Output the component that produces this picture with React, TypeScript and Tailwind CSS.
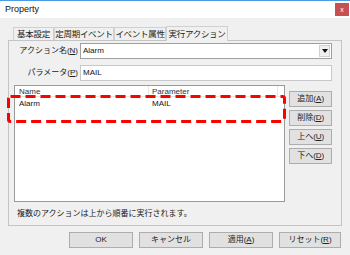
const font = { fontFamily: '"Liberation Sans", "Noto Sans CJK JP", sans-serif' };

function Btn({ children, className = "" }: { children: React.ReactNode; className?: string }) {
  return (
    <div
      className={`flex h-[16px] items-center justify-center border border-[#adadad] bg-[#e1e1e1] text-[8px] text-[#222] ${className}`}
    >
      {children}
    </div>
  );
}

function Tab({ label, w, active }: { label: string; w: string; active?: boolean }) {
  return (
    <div
      className={`flex items-center justify-center border-l border-r border-t border-[#d0d0d0] text-[8.5px] tracking-[-0.3px] text-[#222] ${w} ${
        active ? "z-10 -mb-px h-[15px] bg-[#f0f0f0]" : "h-[13px]"
      }`}
    >
      {label}
    </div>
  );
}

export default function App() {
  return (
    <div className="relative h-[255px] w-[350px] overflow-hidden bg-[#f0f0f0]" style={font}>
      {/* Title bar */}
      <div className="flex h-[18px] items-center justify-between border-t border-[#4a9be0] bg-white pl-[5px] pr-[1px]">
        <span className="text-[9px] text-[#111]">Property</span>
        <div className="flex h-[13px] w-[14px] items-center justify-center bg-[#c75050] text-[7px] leading-none text-white">
          x
        </div>
      </div>

      <div className="px-[8px] pt-[8px]">
        {/* Tabs */}
        <div className="flex items-end pl-[5px]">
          <Tab label="基本設定" w="w-[41px]" />
          <Tab label="定周期イベント" w="w-[60px]" />
          <Tab label="イベント属性" w="w-[52px]" />
          <Tab label="実行アクション" w="w-[62px]" active />
        </div>

        {/* Panel */}
        <div className="flex h-[186px] flex-col border border-[#c4c4c4] pb-[6px] pl-[5px] pr-[9px] pt-[2px]">
          <div className="flex h-[16px] items-center">
            <span className="w-[66px] pr-[2px] text-right text-[8px] text-[#222]">
              アクション名(<u>N</u>)
            </span>
            <div className="flex h-[16px] flex-1 items-center justify-between border border-[#a0a0a0] bg-white pl-[2px] pr-[1px]">
              <span className="text-[8px] text-[#111]">Alarm</span>
              <div className="flex h-[12px] w-[11px] items-center justify-center border border-[#d0d0d0] bg-[#f0f0f0]">
                <svg width="6" height="4" viewBox="0 0 6 4">
                  <path d="M0 0h6L3 4z" fill="#111" />
                </svg>
              </div>
            </div>
          </div>

          <div className="mt-[6px] flex h-[16px] items-center">
            <span className="w-[66px] pr-[2px] text-right text-[8px] text-[#222]">
              パラメータ(<u>P</u>)
            </span>
            <div className="flex h-[16px] flex-1 items-center border border-[#c8c8c8] bg-white pl-[2px]">
              <span className="text-[8px] text-[#111]">MAIL</span>
            </div>
          </div>

          <div className="mt-[4px] flex gap-[4px]">
            {/* List view */}
            <div className="h-[117px] w-[274px] border border-[#9a9a9a] bg-white">
              <div className="flex h-[11px] border-b border-[#e5e5e5] text-[8px] text-[#333]">
                <div className="w-[134px] border-r border-[#e5e5e5] pl-[4px] leading-[11px]">Name</div>
                <div className="w-[129px] border-r border-[#e5e5e5] pl-[3px] leading-[11px]">Parameter</div>
              </div>
              <div className="flex h-[14px] items-center text-[8px] text-[#111]">
                <div className="w-[134px] pl-[4px]">Alarm</div>
                <div className="pl-[3px]">MAIL</div>
              </div>
            </div>

            {/* Side buttons */}
            <div className="flex w-[43px] flex-col gap-[3px] pt-[6px]">
              <Btn className="border-[#7a7a7a]">
                追加(<u>A</u>)
              </Btn>
              <Btn>
                削除(<u>D</u>)
              </Btn>
              <Btn>
                上へ(<u>U</u>)
              </Btn>
              <Btn>
                下へ(<u>D</u>)
              </Btn>
            </div>
          </div>

          <div className="mt-[6px] pl-[3px] text-[8px] text-[#222]">
            複数のアクションは上から順番に実行されます。
          </div>
        </div>

        {/* Dialog buttons */}
        <div className="mt-[6px] flex justify-end gap-[6px] pr-[1px]">
          <Btn className="w-[64px]">OK</Btn>
          <Btn className="w-[64px]">キャンセル</Btn>
          <Btn className="w-[64px]">
            適用(<u>A</u>)
          </Btn>
          <Btn className="w-[62px]">
            リセット(<u>R</u>)
          </Btn>
        </div>
      </div>

      {/* Red dashed highlight annotation */}
      <svg className="absolute left-[7px] top-[95px]" width="279" height="28" viewBox="0 0 279 28">
        <rect
          x="1.5"
          y="1.5"
          width="276"
          height="25"
          rx="2"
          fill="none"
          stroke="#ff0000"
          strokeWidth="3"
          strokeDasharray="10 5"
        />
      </svg>
    </div>
  );
}
